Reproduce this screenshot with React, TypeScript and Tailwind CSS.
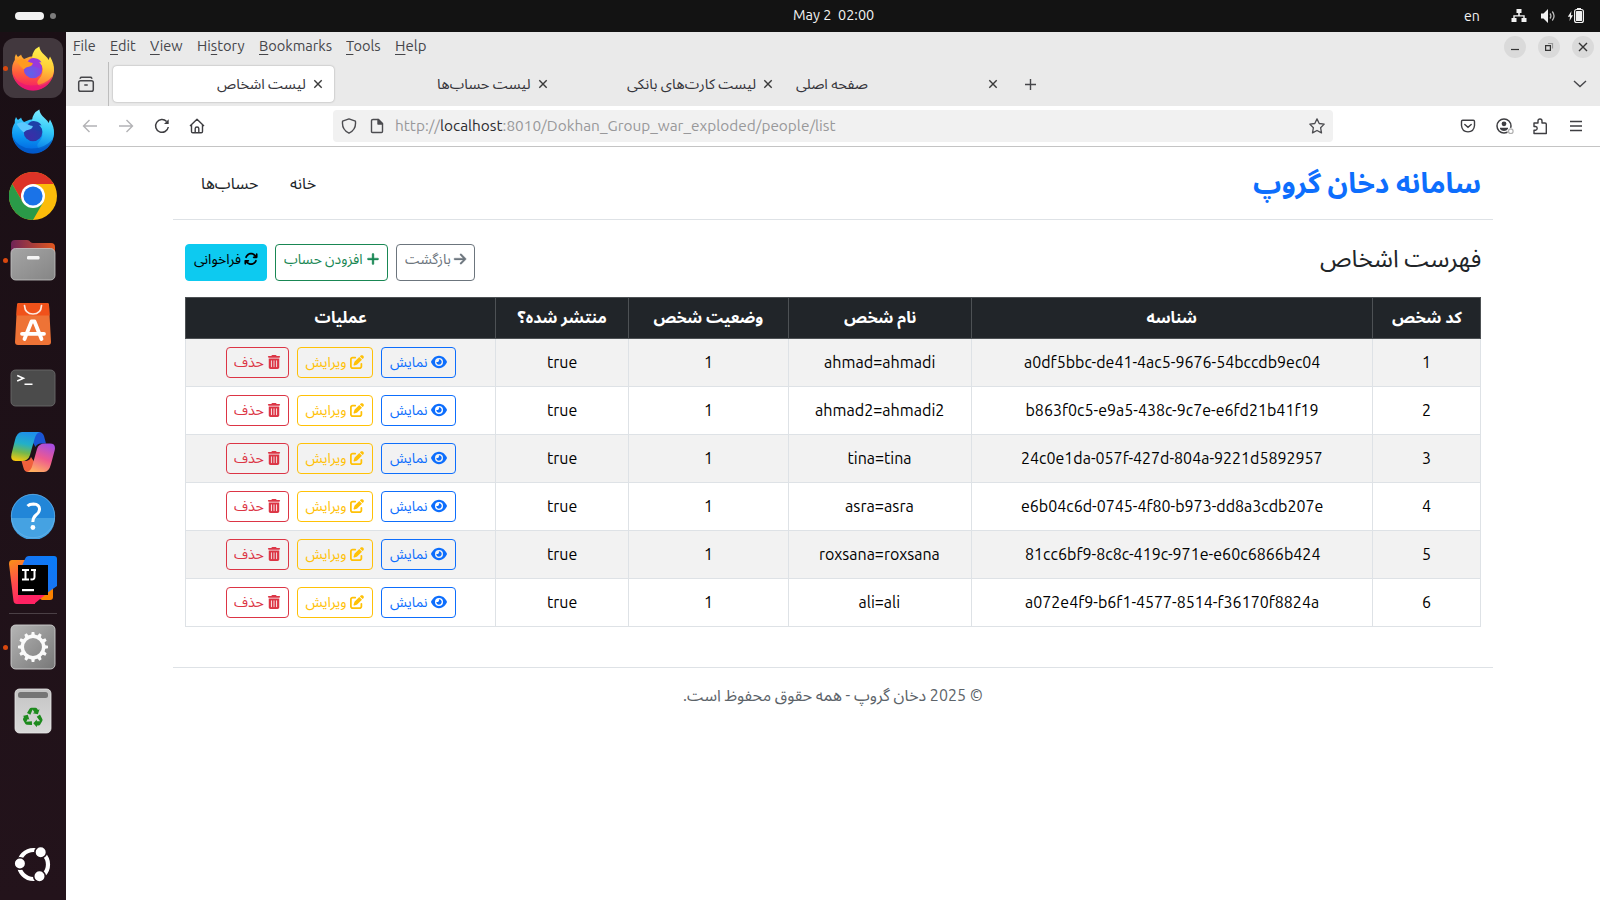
import { useLayoutEffect, useRef, useState, type ReactNode } from 'react';
import { FaEye, FaTrashCan, FaPenToSquare, FaArrowsRotate, FaPlus, FaArrowRight } from 'react-icons/fa6';

/* A single line of text set to an exact measure. */
function Fit({ w, rtl, className = '', children }: { w: number; rtl?: boolean; className?: string; children: ReactNode }) {
  const ref = useRef<HTMLSpanElement>(null);
  const [k, setK] = useState(1);
  useLayoutEffect(() => {
    if (ref.current && ref.current.offsetWidth) setK(w / ref.current.offsetWidth);
  }, [w]);
  return (
    <span dir="ltr" className={`flex shrink-0 ${className}`} style={{ width: w }}>
      <span ref={ref} dir={rtl ? 'rtl' : 'ltr'} className="block shrink-0 origin-left whitespace-pre" style={{ transform: `scaleX(${k})` }}>
        {children}
      </span>
    </span>
  );
}

const menus = [
  { pre: '', u: 'F', post: 'ile', w: 23 },
  { pre: '', u: 'E', post: 'dit', w: 26 },
  { pre: '', u: 'V', post: 'iew', w: 33 },
  { pre: 'Hi', u: 's', post: 'tory', w: 48 },
  { pre: '', u: 'B', post: 'ookmarks', w: 73 },
  { pre: '', u: 'T', post: 'ools', w: 35 },
  { pre: '', u: 'H', post: 'elp', w: 31 },
];

const people = [
  { id: '1', uuid: 'a0df5bbc-de41-4ac5-9676-54bccdb9ec04', uw: 296, name: 'ahmad=ahmadi', nw: 111 },
  { id: '2', uuid: 'b863f0c5-e9a5-438c-9c7e-e6fd21b41f19', uw: 293, name: 'ahmad2=ahmadi2', nw: 129 },
  { id: '3', uuid: '24c0e1da-057f-427d-804a-9221d5892957', uw: 302, name: 'tina=tina', nw: 64 },
  { id: '4', uuid: 'e6b04c6d-0745-4f80-b973-dd8a3cdb207e', uw: 302, name: 'asra=asra', nw: 69 },
  { id: '5', uuid: '81cc6bf9-8c8c-419c-971e-e60c6866b424', uw: 295, name: 'roxsana=roxsana', nw: 121 },
  { id: '6', uuid: 'a072e4f9-b6f1-4577-8514-f36170f8824a', uw: 294, name: 'ali=ali', nw: 42 },
];

const heads = [
  { t: 'عملیات', w: 52 },
  { t: 'منتشر شده؟', w: 89 },
  { t: 'وضعیت شخص', w: 110 },
  { t: 'نام شخص', w: 72 },
  { t: 'شناسه', w: 51 },
  { t: 'کد شخص', w: 70 },
];

function CloseX() {
  return (
    <svg width="10" height="10" viewBox="0 0 10 10" className="shrink-0">
      <path d="M1.3 1.3l7.4 7.4M8.7 1.3L1.3 8.7" stroke="#3a3a3a" strokeWidth="1.4" />
    </svg>
  );
}

function Fox({ id, body, tail, paw, globe, glow }: { id: string; body: string[]; tail: string[]; paw: string; globe: string[]; glow: string }) {
  return (
    <svg width="44" height="46" viewBox="0 0 44 46">
      <defs>
        <linearGradient id={`${id}b`} x1="0.5" y1="0.1" x2="0.45" y2="1">
          <stop offset="0" stopColor={body[0]} /><stop offset=".5" stopColor={body[1]} /><stop offset="1" stopColor={body[2]} />
        </linearGradient>
        <linearGradient id={`${id}t`} x1="0.5" y1="0" x2="0.4" y2="1">
          <stop offset="0" stopColor={tail[0]} /><stop offset=".5" stopColor={tail[1]} /><stop offset="1" stopColor={tail[2]} />
        </linearGradient>
        <radialGradient id={`${id}g`} cx=".4" cy=".75" r=".8">
          <stop offset="0" stopColor={globe[0]} /><stop offset="1" stopColor={globe[1]} />
        </radialGradient>
      </defs>
      <path d="M3.800 15Q3.500 11.500 5 9Q6 11 7 12Q8 11 9.500 10.200L10 9.500Q10.500 12 13 14Q22 9 31 12Q43 17 43 25A21 20.500 0 0 1 1 25Q1 19 3.800 15Z" fill={`url(#${id}b)`} />
      <path d="M21 12.500Q21.500 5 28.300 1.500Q29 6.500 34 10.500Q36.500 12.500 37.500 15L39 11.500Q43.500 19 43 26Q41.500 38 29 41Q24 38 28 34Q33 29 31 21Q28 15 21 12.500Z" fill={`url(#${id}t)`} />
      <path d="M1.800 29Q7 40 20 40.500Q33 41 41.500 31.500Q37 44.500 22 45.500Q6 44.500 1.800 29Z" fill={glow} opacity=".6" />
      <circle cx="22" cy="24" r="9.300" fill={`url(#${id}g)`} />
      <path d="M16.500 17Q19 12.500 24 13.200Q29 14 30.500 17.500Q28.500 16.800 27.500 17.200Q31 20 30.800 24L22 21Z" fill={globe[1]} />
      <path d="M5.500 16Q11 12.200 17 16.500Q19 17.700 21.800 18Q21.500 20.800 18.500 21.400Q14.500 22 12.700 24.500Q9 21.500 5.500 16Z" fill={paw} />
    </svg>
  );
}

function Slot({ h, dot, active, children }: { h: number; dot?: boolean; active?: boolean; children: ReactNode }) {
  return (
    <div className="relative flex w-[66px] shrink-0 items-center justify-center" style={{ height: h }}>
      {active && <span className="absolute left-[3px] h-[60px] w-[60px] rounded-[12px] bg-[#42383e]" />}
      {dot && <span className="absolute left-[3px] h-[5px] w-[5px] rounded-full bg-[#d9480f]" />}
      <span className="relative">{children}</span>
    </div>
  );
}

const teeth = [0, 30, 60, 90, 120, 150, 180, 210, 240, 270, 300, 330];

function Dock() {
  return (
    <aside className="flex w-[66px] shrink-0 flex-col bg-linear-to-b from-[#1a0f15] to-[#23131b] pt-1">
      <Slot h={64} dot active>
        <Fox id="fa" body={['#ffa930', '#ff5a3c', '#f5156c']} tail={['#fff44f', '#ffcf38', '#ff7a35']} paw="#ff9a1f" globe={['#5f62ea', '#9a38dc']} glow="#e3127c" />
      </Slot>
      <Slot h={62}>
        <Fox id="fb" body={['#35c4fb', '#0a96f2', '#0060df']} tail={['#80ebff', '#35ccf8', '#0a84ea']} paw="#5cc8ff" globe={['#3a2ea8', '#1d3fa8']} glow="#0250bb" />
      </Slot>
      <Slot h={67}>
        <svg width="48" height="48" viewBox="0 0 48 48">
          <circle cx="24" cy="24" r="24" fill="#fbbc0a" />
          <path d="M3.200 12A24 24 0 0 1 44.800 12L24 12L13.600 30Z" fill="#dd3327" />
          <path d="M3.200 12L13.600 30L24 36L34.400 30L24 48A24 24 0 0 1 3.200 12Z" fill="#2a9a48" />
          <circle cx="24" cy="24" r="12" fill="#fff" />
          <circle cx="24" cy="24" r="9.600" fill="#1a73e8" />
        </svg>
      </Slot>
      <Slot h={62} dot>
        <svg width="46" height="42" viewBox="0 0 46 42">
          <defs>
            <linearGradient id="fo"><stop offset="0" stopColor="#6f2457" /><stop offset="1" stopColor="#e2581f" /></linearGradient>
            <linearGradient id="fg" x1="0" y1="0" x2="1" y2="1"><stop offset="0" stopColor="#a5a5a5" /><stop offset="1" stopColor="#858585" /></linearGradient>
          </defs>
          <path d="M1 20V5Q1 1 5 1H17Q19 1 20.500 3Q21.500 4 23 4H41Q45 4 45 8V20Z" fill="url(#fo)" />
          <rect x="1" y="9.500" width="44" height="31.500" rx="4.500" fill="url(#fg)" stroke="#c5c5c5" strokeWidth=".8" />
          <rect x="17" y="17" width="12.500" height="3.500" rx="1.200" fill="#f5f5f5" />
        </svg>
      </Slot>
      <Slot h={65}>
        <svg width="36" height="43" viewBox="0 0 36 43">
          <path d="M4 1H32Q34 1 34 3L36 40Q36 43 33 43H3Q0 43 0 40L2 3Q2 1 4 1Z" fill="#ee7336" />
          <path d="M4 1H32Q34 1 34 3L34.600 13.500H1.400L2 3Q2 1 4 1Z" fill="#f0521a" />
          <path d="M9.500 3.500Q10 12 18 12Q26 12 26.500 3.500" fill="none" stroke="#fbe9df" strokeWidth="1.700" strokeLinecap="round" />
          <path d="M9.500 37L16.500 19.500H19.500L26.500 37M7 31.800H29" fill="none" stroke="#fff" strokeWidth="3.800" strokeLinecap="round" strokeLinejoin="round" />
        </svg>
      </Slot>
      <Slot h={64}>
        <svg width="46" height="38" viewBox="0 0 46 38">
          <rect x="1" y="1" width="44" height="36" rx="4.500" fill="#4b4b4b" stroke="#6a6a6a" strokeWidth=".9" />
          <path d="M7.200 6.500L13.500 9.200L7.200 12M14.500 15.300H22.500" fill="none" stroke="#fff" strokeWidth="1.500" />
        </svg>
      </Slot>
      <Slot h={64}>
        <svg width="46" height="42" viewBox="0 0 46 42">
          <defs>
            <linearGradient id="ca" x1="0.500" y1="0" x2="0.300" y2="1"><stop offset="0" stopColor="#1e8fea" /><stop offset=".4" stopColor="#22b0c8" /><stop offset=".7" stopColor="#74b84c" /><stop offset="1" stopColor="#f5c810" /></linearGradient>
            <linearGradient id="cb" x1="0.700" y1="0" x2="0.300" y2="1"><stop offset="0" stopColor="#a84de0" /><stop offset=".5" stopColor="#ee5a8f" /><stop offset="1" stopColor="#ffb060" /></linearGradient>
          </defs>
          <path d="M22 1H29Q32.500 1 34 5L36 12.500H31Q27 12.500 25.500 16L22 10Z" fill="#1a55d4" />
          <path d="M23 41H18Q14.500 41 13.500 37L11.500 30H16Q20 29.500 21 26L25 32Z" fill="#f0603c" />
          <path d="M12 1H30Q26 2 24.500 8L20 24Q18 30 12 30H5.500Q0 30 1.500 23L5 9Q7 1 12 1Z" fill="url(#ca)" />
          <path d="M34 41H17Q21 40 22.500 34L27 18Q28.500 12.500 35 12.500H40Q46.500 12.500 44.500 20L41 33Q39 41 34 41Z" fill="url(#cb)" />
        </svg>
      </Slot>
      <Slot h={64}>
        <svg width="46" height="46" viewBox="0 0 46 46">
          <circle cx="23" cy="23" r="22" fill="#2286d8" />
          <path d="M1 25A22 22 0 0 0 45 25Z" fill="#45a2e2" />
          <circle cx="23" cy="23" r="21.700" fill="none" stroke="#6bb5ea" strokeWidth=".7" />
          <path d="M17.500 13Q19.500 11 23.500 11Q29.800 11.300 29.500 16.500Q29.300 19.500 26 22Q23 24.500 22.800 29" fill="none" stroke="#fff" strokeWidth="3" />
          <circle cx="22.900" cy="34.500" r="2.400" fill="#fff" />
        </svg>
      </Slot>
      <Slot h={64}>
        <svg width="48" height="48" viewBox="0 0 48 48">
          <defs>
            <linearGradient id="ij" x1="0.200" y1="0" x2="0.500" y2="1"><stop offset="0" stopColor="#f98b1c" /><stop offset=".5" stopColor="#ff4a4c" /><stop offset="1" stopColor="#ff2266" /></linearGradient>
            <linearGradient id="ib" x1="1" y1="0" x2="0" y2="1"><stop offset="0" stopColor="#087cfa" /><stop offset=".6" stopColor="#1a73f0" /><stop offset="1" stopColor="#9a4fb0" /></linearGradient>
          </defs>
          <path d="M24 28H44V41Q44 44 41 44H33L22 38Z" fill="#fb8200" />
          <path d="M3 4H17L26 12V48H8Q5 48 4.500 45L0 8Q0 4 3 4Z" fill="url(#ij)" />
          <path d="M8 48H25L36 39H10Z" fill="#ff2263" />
          <path d="M20 0H45Q48 0 48 3V30L38 37L12 12L16 3Q17 0 20 0Z" fill="url(#ib)" />
          <rect x="9" y="9" width="30" height="30" fill="#000" />
          <path d="M13 14H20M16.500 14V23.500M13 23.500H20M22 14H27M25.500 14V21Q25.500 24 21.500 23.300" fill="none" stroke="#fff" strokeWidth="2" />
          <rect x="13" y="33" width="12" height="2.200" fill="#fff" />
        </svg>
      </Slot>
      <div className="mx-auto mt-px h-px w-[48px] shrink-0 bg-[#4b4046]" />
      <Slot h={66} dot>
        <svg width="46" height="46" viewBox="0 0 46 46">
          <defs><linearGradient id="se" x1="0" y1="0" x2="1" y2="1"><stop offset="0" stopColor="#b5b5b5" /><stop offset="1" stopColor="#777" /></linearGradient></defs>
          <rect x="1" y="1" width="44" height="44" rx="4.500" fill="url(#se)" stroke="#cfcfcf" strokeWidth=".9" />
          <circle cx="23" cy="23" r="10.700" fill="none" stroke="#fafafa" strokeWidth="3.400" />
          {teeth.map((a) => <path key={a} d="M21 12L21.700 8H24.300L25 12Z" fill="#fafafa" transform={`rotate(${a} 23 23)`} />)}
        </svg>
      </Slot>
      <Slot h={62}>
        <svg width="38" height="46" viewBox="0 0 38 46">
          <defs><linearGradient id="tr" x2="0" y2="1"><stop offset="0" stopColor="#c4c4c4" /><stop offset="1" stopColor="#d9d9d9" /></linearGradient></defs>
          <rect x="1" y="1" width="36" height="44" rx="4.500" fill="url(#tr)" stroke="#e8e8e8" strokeWidth=".8" />
          <rect x="4" y="4" width="30" height="6" rx="2.500" fill="#757575" />
          <g transform="translate(19 29.500)" fill="#1d8a1d">
            {[0, 120, 240].map((a) => <path key={a} d="M-6 -4.600L-3.400 -8.800Q-2.700 -9.800 -1.500 -9.800H2.500Q3.600 -9.800 4.200 -8.800L5 -7.400L6.500 -8.200L4.900 -3.200L-.2 -4.300L1.400 -5.200L-.4 -8L-2.600 -2.800Z" transform={`rotate(${a})`} />)}
          </g>
        </svg>
      </Slot>
      <div className="flex flex-1 items-end justify-center pb-[17px]">
        <svg width="38" height="38" viewBox="0 0 38 38">
          <circle cx="19.500" cy="19.500" r="14.500" fill="none" stroke="#fff" strokeWidth="4.200" />
          <g fill="#fff" stroke="#22131b" strokeWidth="1.600">
            <circle cx="5.900" cy="18.500" r="5.800" /><circle cx="26.700" cy="7.200" r="5.800" /><circle cx="25.500" cy="31.300" r="5.800" />
          </g>
        </svg>
      </div>
    </aside>
  );
}

function TopBar() {
  return (
    <header className="flex h-8 shrink-0 items-center bg-[#131313] text-[15px] text-[#f2f2f2]">
      <div className="flex w-[793px] items-center gap-[6px] pl-[15px]">
        <span className="h-2 w-[29px] rounded-full bg-[#f2f2f2]" />
        <span className="h-[6px] w-[6px] rounded-full bg-[#7d7d7d]" />
      </div>
      <Fit w={81} className="-mt-0.5">May 2  02:00</Fit>
      <div className="flex flex-1 items-center justify-end pr-[15px]">
        <Fit w={16}>en</Fit>
        <svg width="16" height="16" viewBox="0 0 16 16" className="ml-[31px]" fill="#f2f2f2">
          <path d="M5.500 1H10.500V5H8.800V7.200H13.700V10H15.500V14H10.500V10H12.300V8.600H3.700V10H5.500V14H.5V10H2.300V7.200H7.200V5H5.500Z" />
        </svg>
        <svg width="16" height="16" viewBox="0 0 16 16" className="ml-[13px]" fill="#f2f2f2">
          <path d="M1 5.500H3.500L8 1V15L3.500 10.500H1Z" />
          <path d="M10 5.500Q11.800 8 10 10.500M12.300 3.500Q15.800 8 12.300 12.500" fill="none" stroke="#bdbdbd" strokeWidth="1.300" />
        </svg>
        <svg width="18" height="16" viewBox="0 0 18 16" className="ml-[11px]" fill="#f2f2f2">
          <path d="M4.500 3L.8 8.800H3L2.500 13L6 7.200H3.900Z" />
          <rect x="10" y="0" width="4" height="2" />
          <rect x="7.600" y="1.500" width="8.800" height="13" rx="2" fill="none" stroke="#f2f2f2" strokeWidth="1.200" />
          <rect x="9" y="3" width="6" height="10" rx=".6" />
        </svg>
      </div>
    </header>
  );
}

function Tab({ t, w, active, ltr }: { t: string; w: number; active?: boolean; ltr?: boolean }) {
  return (
    <div className="flex w-[225px] shrink-0 px-[2px] py-1">
      <div className={`flex flex-1 items-center gap-[7px] rounded-[4px] pr-[11px] pl-[8px] ${active ? 'bg-white shadow-[0_0_2px_rgba(0,0,0,0.35)]' : ''} ${ltr ? 'justify-between' : 'justify-end'}`}>
        <Fit w={w} rtl className="text-[14px] text-[#35343a]">{t}</Fit>
        <CloseX />
      </div>
    </div>
  );
}

function WinBtn({ children }: { children: ReactNode }) {
  return (
    <span className="flex h-[22px] w-[22px] items-center justify-center rounded-full bg-[#dadada]">
      <svg width="12" height="12" viewBox="0 0 12 12" fill="none" stroke="#333" strokeWidth="1.200">{children}</svg>
    </span>
  );
}

function Chrome() {
  return (
    <div className="shrink-0 border-b border-[#c4c4c4] text-[15px] text-[#46464a]">
      <div className="flex h-[30px] items-center bg-[#eaeaea] pr-[6px] pl-[7px]">
        <div className="flex flex-1 gap-[14px] pb-px">
          {menus.map((m) => (
            <Fit key={m.u + m.post} w={m.w}>
              {m.pre}<span className="underline underline-offset-[3px]">{m.u}</span>{m.post}
            </Fit>
          ))}
        </div>
        <div className="flex gap-3">
          <WinBtn><path d="M2 8.500H10" /></WinBtn>
          <WinBtn><path d="M2.600 4.600H7.400V9.400H2.600Z" /><path d="M5 2.500H9.500V7.500" stroke="#999" /></WinBtn>
          <WinBtn><path d="M2 2L10 10M10 2L2 10" strokeWidth="1.400" /></WinBtn>
        </div>
      </div>
      <div className="flex h-11 bg-[#eaeaea]">
        <div className="flex w-[43px] items-center justify-center border-r border-[#bdbdbd] pr-[3px]">
          <svg width="18" height="18" viewBox="0 0 18 18" fill="none" stroke="#46464a" strokeWidth="1.500" strokeLinecap="round">
            <path d="M3.200 3.200Q3.600 2.300 4.600 2.300H13.400Q14.400 2.300 14.800 3.200M7.800 10H10.200" /><rect x="1.700" y="5.800" width="14.600" height="10.500" rx="1.800" />
          </svg>
        </div>
        <div className="flex pl-[2px]">
          <Tab t="لیست اشخاص" w={89} active />
          <Tab t="لیست حساب‌ها" w={94} />
          <Tab t="لیست کارت‌های بانکی" w={129} />
          <Tab t="صفحه اصلی" w={72} ltr />
        </div>
        <div className="flex flex-1 items-center justify-between pr-[13px] pl-[12px]">
          <svg width="14" height="14" viewBox="0 0 14 14"><path d="M7.500 2V13M2 7.500H13" stroke="#46464a" strokeWidth="1.400" /></svg>
          <svg width="14" height="14" viewBox="0 0 14 14"><path d="M1 4L7 9.500L13 4" fill="none" stroke="#46464a" strokeWidth="1.400" /></svg>
        </div>
      </div>
      <div className="flex h-10 items-center bg-white">
        <div className="flex w-[267px] items-center gap-[20px] pl-[16px]">
          <svg width="16" height="16" viewBox="0 0 16 16" fill="none" stroke="#b3b3b6" strokeWidth="1.400"><path d="M15 8H1.500M7.500 2L1.500 8L7.500 14" /></svg>
          <svg width="16" height="16" viewBox="0 0 16 16" fill="none" stroke="#b3b3b6" strokeWidth="1.400"><path d="M1 8H14.500M8.500 2L14.500 8L8.500 14" /></svg>
          <svg width="16" height="16" viewBox="0 0 16 16" fill="none" stroke="#3e3e42" strokeWidth="1.500"><path d="M14.300 9A6.400 6.400 0 1 1 12.600 3.500" /><path d="M14.700 1.200V6H10Z" fill="#3e3e42" stroke="none" /></svg>
          <svg width="16" height="16" viewBox="0 0 16 16" className="-ml-px" fill="none" stroke="#3e3e42" strokeWidth="1.400" strokeLinejoin="round"><path d="M1 8L8 1.200L15 8M2.500 7V13.500Q2.500 14.800 3.800 14.800H12.200Q13.500 14.800 13.500 13.500V7M6.200 14.500V10.500Q6.200 9 8 9Q9.800 9 9.800 10.500V14.500" /></svg>
        </div>
        <div className="flex h-8 w-[1000px] items-center rounded-[4px] bg-[#f1f1f1] pr-[8px] pl-[8px]">
          <svg width="16" height="16" viewBox="0 0 16 16" fill="none" stroke="#4c4c50" strokeWidth="1.400" strokeLinejoin="round"><path d="M8 .9L14.400 3.200Q15.500 11.500 8 15.200Q.5 11.500 1.600 3.200Z" /></svg>
          <svg width="16" height="16" viewBox="0 0 16 16" className="ml-[12px]" fill="none" stroke="#4c4c50" strokeWidth="1.400" strokeLinejoin="round"><path d="M4 1.500H9.500L13.500 5.500V13.500Q13.500 14.500 12.500 14.500H3.500Q2.500 14.500 2.500 13.500V2.800Q2.500 1.500 4 1.500Z" /><path d="M9 1.500V6H13.500Z" fill="#4c4c50" /></svg>
          <Fit w={441} className="ml-[10px] text-[15px] leading-6 text-[#98989a]">http://<span className="text-[#2c2c30]">localhost</span>:8010/Dokhan_Group_war_exploded/people/list</Fit>
          <svg width="16" height="16" viewBox="0 0 16 16" className="ml-auto" fill="none" stroke="#4c4c50" strokeWidth="1.300" strokeLinejoin="round"><path d="M8 .9L10.200 5.500L15.200 6.100L11.600 9.700L12.500 14.900L8 12.500L3.500 14.900L4.400 9.700L.8 6.100L5.800 5.500Z" /></svg>
        </div>
        <div className="flex flex-1 items-center justify-end pr-[17px]">
          <svg width="16" height="16" viewBox="0 0 16 16" fill="none" stroke="#3e3e42" strokeWidth="1.400" strokeLinecap="round"><path d="M2.700 2.200H13.300Q14.500 2.200 14.500 3.400V7.500Q14 13.700 8 13.900Q2 13.700 1.500 7.500V3.400Q1.500 2.200 2.700 2.200ZM4.800 6.500L8 9.300L11.200 6.500" /></svg>
          <svg width="18" height="17" viewBox="0 0 18 17" className="ml-[20px]" fill="none" stroke="#3e3e42" strokeWidth="1.500"><circle cx="8" cy="8" r="7" /><circle cx="8" cy="5.800" r="2.400" fill="#3e3e42" stroke="none" /><path d="M4 9.800H12V11Q10.500 13 8 13Q5.500 13 4 11Z" fill="#3e3e42" stroke="none" /><circle cx="14.800" cy="13.200" r="3.400" fill="#fff" stroke="none" /><circle cx="14.800" cy="13.200" r="2.300" stroke="#b0b0b0" strokeWidth="1.200" /></svg>
          <svg width="16" height="17" viewBox="0 0 16 17" className="ml-[18px]" fill="none" stroke="#3e3e42" strokeWidth="1.400" strokeLinejoin="round"><path d="M2 5H6V3Q6 1 8 1Q10 1 10 3V5H13Q14.300 5 14.300 6.300V15.500H2V12.300H3.500Q5.200 12 5.200 10.300Q5.200 8.700 3.500 8.500H2Z" /></svg>
          <svg width="14" height="16" viewBox="0 0 14 16" className="ml-[21px]" fill="none" stroke="#3e3e42" strokeWidth="1.300"><path d="M1 3.500H13M1 8H13M1 12.500H13" /></svg>
        </div>
      </div>
    </div>
  );
}

function Btn({ t, w, icon, className }: { t: string; w: number; icon: ReactNode; className: string }) {
  return (
    <button className={`flex justify-center gap-[3px] rounded-[4px] border text-[14px] leading-[21px] ${className}`}>
      <Fit w={w} rtl>{t}</Fit>
      <span className="pt-[3px]">{icon}</span>
    </button>
  );
}

const cols = 'grid grid-cols-[310px_133px_160px_183px_401px_108px]';

function Page() {
  return (
    <main className="flex flex-1 flex-col bg-white pl-[107px] text-[#212529]">
      <div className="flex h-[73px] w-[1320px] items-center justify-between border-b border-[#dee2e6] pr-3 pl-[28px] pb-px">
        <nav className="flex gap-[32px] text-[16px]">
          <Fit w={57} rtl>حساب‌ها</Fit>
          <Fit w={26} rtl>خانه</Fit>
        </nav>
        <Fit w={228} rtl className="text-[28px] font-bold text-[#0d6efd]">سامانه دخان گروپ</Fit>
      </div>
      <div className="mt-6 flex h-[37px] w-[1320px] items-stretch justify-between px-3">
        <div className="flex gap-2">
          <Btn t="فراخوانی" w={47} icon={<FaArrowsRotate size={14} />} className="w-[82px] border-[#0dcaf0] bg-[#0dcaf0] pt-1 text-black" />
          <Btn t="افزودن حساب" w={78.5} icon={<FaPlus size={14} className="stroke-current stroke-[16px]" />} className="w-[113px] border-[#198754] pt-1 pl-px text-[#198754]" />
          <Btn t="بازگشت" w={45.5} icon={<FaArrowRight size={14} className="stroke-current stroke-[12px]" />} className="w-[79px] border-[#6c757d] pt-1 pl-px text-[#6c757d]" />
        </div>
        <Fit w={161} rtl className="text-[24px] leading-[30px]">فهرست اشخاص</Fit>
      </div>
      <section className="mt-4 ml-3 w-[1296px] text-[16px]">
        <div className="border-y border-l border-[#4d5154] bg-[#212529] font-bold text-white">
          <div className={cols}>
            {heads.map((h) => (
              <div key={h.t} className="flex h-10 items-center justify-center border-r border-[#4d5154] pb-0.5"><Fit w={h.w} rtl>{h.t}</Fit></div>
            ))}
          </div>
        </div>
        {people.map((p) => (
          <div key={p.id} className={`${cols} h-12 border-b border-l border-[#dee2e6] text-black odd:bg-white even:bg-[#f2f2f2] *:flex *:items-center *:justify-center *:border-r *:border-[#dee2e6]`}>
            <div className="gap-2">
              <Btn t="حذف" w={29.5} icon={<FaTrashCan size={14} />} className="h-[31px] w-[63px] border-[#dc3545] pt-1 pl-px text-[#dc3545]" />
              <Btn t="ویرایش" w={41} icon={<FaPenToSquare size={14} />} className="h-[31px] w-[76px] border-[#ffc107] pt-1 text-[#ffc107]" />
              <Btn t="نمایش" w={37.5} icon={<FaEye size={16} className="-mt-px" />} className="h-[31px] w-[75px] border-[#0d6efd] pt-1 pl-px text-[#0d6efd]" />
            </div>
            <div className="pb-0.5"><Fit w={30}>true</Fit></div>
            <div className="pb-0.5"><Fit w={9}>1</Fit></div>
            <div className="pr-px pb-0.5"><Fit w={p.nw}>{p.name}</Fit></div>
            <div className="pb-0.5"><Fit w={p.uw}>{p.uuid}</Fit></div>
            <div className="pb-0.5"><Fit w={9}>{p.id}</Fit></div>
          </div>
        ))}
      </section>
      <footer className="mt-10 flex w-[1320px] justify-center border-t border-[#dee2e6] pt-[15px] text-[16px] text-[#5c6369]">
        <Fit w={300} rtl>© 2025 دخان گروپ - همه حقوق محفوظ است.</Fit>
      </footer>
    </main>
  );
}

export default function App() {
  return (
    <div className="flex h-[900px] w-[1600px] flex-col overflow-hidden font-['Ubuntu','Noto_Sans','Noto_Sans_Arabic','DejaVu_Sans',sans-serif]">
      <TopBar />
      <div className="flex min-h-0 flex-1">
        <Dock />
        <div className="flex min-w-0 flex-1 flex-col">
          <Chrome />
          <Page />
        </div>
      </div>
    </div>
  );
}
